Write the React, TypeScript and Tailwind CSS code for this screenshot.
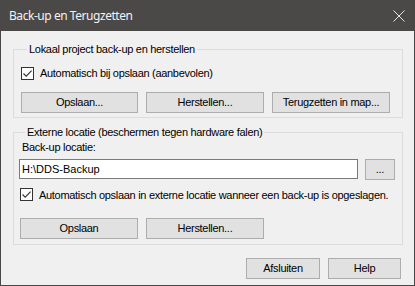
import React from 'react'

function Btn({ children, className }: { children: React.ReactNode; className: string }) {
    return (
        <button className={"h-[21px] bg-[#e1e1e1] border border-[#adadad] text-[11px] leading-none text-black flex items-center justify-center " + className}>
            {children}
        </button>
    )
}

function Check() {
    return (
        <span className="w-[13px] h-[13px] border border-[#333333] bg-white flex items-center justify-center shrink-0">
            <svg width="11" height="11" viewBox="0 0 11 11">
                <path d="M1.5 5.5 L4.2 8.2 L9.6 2.6" fill="none" stroke="#333333" strokeWidth="1.1" />
            </svg>
        </span>
    )
}

function App() {
    return (
        <div className="w-[415px] h-[286px] bg-[#f0f0f0] border border-[#4a4846] flex flex-col font-['Liberation_Sans',Arial,sans-serif] text-[11px] tracking-[-0.3px] text-black overflow-hidden">
            {/* title bar */}
            <div className="h-[30px] bg-[#4b4947] flex items-center justify-between pl-[8px] pr-[9px] shrink-0">
                <div className="text-[#f2f2f2] text-[12px] tracking-[-0.45px] font-['Noto_Sans',sans-serif]">Back-up en Terugzetten</div>
                <svg width="12" height="12" viewBox="0 0 12 12">
                    <path d="M0.5 0.5 L11.5 11.5 M11.5 0.5 L0.5 11.5" stroke="#e6e6e6" strokeWidth="1" />
                </svg>
            </div>

            <div className="flex flex-col pl-[12px] pr-[12px]">
                <fieldset className="mt-[12px] w-[390px] border border-[#dcdcdc] pl-[7px] pb-[4px]">
                    <legend className="ml-[6px] px-[2px] leading-[13px]">Lokaal project back-up en herstellen</legend>
                    <div className="flex items-center gap-[6px] mt-[9px]">
                        <Check />
                        <span>Automatisch bij opslaan (aanbevolen)</span>
                    </div>
                    <div className="flex gap-[8px] mt-[10px]">
                        <Btn className="w-[117px]">Opslaan...</Btn>
                        <Btn className="w-[118px]">Herstellen...</Btn>
                        <Btn className="w-[118px]">Terugzetten in map...</Btn>
                    </div>
                </fieldset>

                <fieldset className="mt-[8px] w-[390px] border border-[#dcdcdc] pl-[5px] pb-[5px]">
                    <legend className="ml-[6px] px-[2px] leading-[13px]">Externe locatie (beschermen tegen hardware falen)</legend>
                    <div className="pl-[3px] mt-[2px] leading-[13px]">Back-up locatie:</div>
                    <div className="flex items-center mt-[5px]">
                        <div className="w-[339px] h-[20px] bg-white border border-[#7a7a7a] flex items-center pl-[2px] text-[11px] tracking-normal">H:\DDS-Backup</div>
                        <Btn className="w-[30px] ml-[7px] text-[10px]">...</Btn>
                    </div>
                    <div className="flex items-center gap-[6px] mt-[7px] pl-[1px] whitespace-nowrap">
                        <Check />
                        <span>Automatisch opslaan in externe locatie wanneer een back-up is opgeslagen.</span>
                    </div>
                    <div className="flex gap-[8px] mt-[15px] pl-[1px]">
                        <Btn className="w-[118px]">Opslaan</Btn>
                        <Btn className="w-[118px]">Herstellen...</Btn>
                    </div>
                </fieldset>

                <div className="flex justify-end gap-[8px] mt-[13px] pr-[1px]">
                    <Btn className="w-[74px]">Afsluiten</Btn>
                    <Btn className="w-[73px]">Help</Btn>
                </div>
            </div>
        </div>
    )
}

export default App
